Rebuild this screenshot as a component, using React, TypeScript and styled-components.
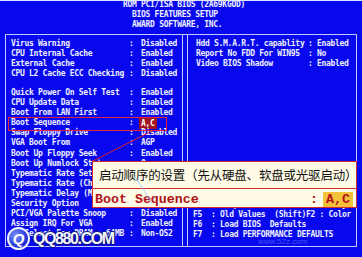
import React from 'react';
import styled, { createGlobalStyle } from 'styled-components';

const GlobalStyle = createGlobalStyle`
  html, body {
    margin: 0;
    padding: 0;
    background: #0808ee;
  }
  body {
    width: 362px;
    height: 257px;
    overflow: hidden;
  }
`;

const Screen = styled.div`
  position: relative;
  width: 362px;
  height: 257px;
  overflow: hidden;
  background: #0808ee;
  box-shadow: inset 0 1px 0 #dfe3ff;
  font-family: "DejaVu Sans Mono", "Liberation Mono", monospace;
  font-weight: bold;
  font-size: 8px;
  letter-spacing: -0.3px;
  color: #eef0ff;
`;

const Header = styled.div`
  padding-left: 123px;
  white-space: pre;
  line-height: 10px;
`;

const Frame = styled.div`
  display: flex;
  gap: 4px;
  margin: 4px 0 0 5px;
  width: 352px;
  height: 213px;
  box-sizing: border-box;
  border: 1px solid #c4c8f8;
`;

const LeftPanel = styled.div`
  width: 177px;
  box-sizing: border-box;
  border-right: 1px solid #c4c8f8;
  padding: 4px 0 0 5px;
`;

const RightPanel = styled.div`
  display: flex;
  flex-direction: column;
  width: 169px;
  box-sizing: border-box;
  border-left: 1px solid #c4c8f8;
  padding: 4px 0 0 8px;
`;

const Row = styled.div<{ $lw: number; $cw: number }>`
  display: grid;
  grid-template-columns: ${p => p.$lw}px ${p => p.$cw}px auto;
  height: 10.1px;
  line-height: 10.1px;
  white-space: pre;
`;

const Gap = styled.div`
  height: 8.6px;
`;

const Picked = styled.span`
  display: inline-block;
  justify-self: start;
  margin-left: -2px;
  padding: 0 2px;
  height: 11px;
  line-height: 11px;
  margin-top: -0.5px;
  background: #a0101e;
  color: #fff;
`;

const HelpBox = styled.div`
  margin: auto 0 0 -8px;
  border-top: 1px solid #c4c8f8;
  padding: 2px 0 6px 5px;
`;

const HelpLine = styled.div`
  height: 10px;
  line-height: 10px;
  white-space: pre;
`;

const Marks = styled.svg`
  position: absolute;
  left: 0;
  top: 0;
  pointer-events: none;
`;

const Callout = styled.div`
  position: absolute;
  left: 92px;
  top: 161px;
  width: 265px;
  height: 47px;
  box-sizing: border-box;
  border: 1.5px solid #d42a2a;
  background: #fffbe6;
  display: flex;
  flex-direction: column;
  letter-spacing: normal;
`;

const CalloutNote = styled.div`
  height: 25.5px;
  display: flex;
  align-items: center;
  padding-left: 6px;
  border-bottom: 1px solid #d42a2a;
  font-family: "Noto Sans CJK SC", "Noto Sans", sans-serif;
  font-weight: normal;
  font-size: 12.5px;
  letter-spacing: -0.2px;
  color: #111;
  white-space: nowrap;
`;

const CalloutValue = styled.div`
  flex: 1;
  display: flex;
  align-items: center;
  padding: 3px 3px 0 2px;
  font-family: "Liberation Mono", "DejaVu Sans Mono", monospace;
  font-weight: bold;
  font-size: 13.3px;
  color: #b3121b;
  white-space: pre;
`;

const Colon = styled.span`
  margin-left: auto;
`;

const BigPicked = styled.span`
  margin-left: 5px;
  padding: 0 3px;
  background: #f3c13a;
  line-height: 15px;
`;

const Logo = styled.div`
  position: absolute;
  left: 7px;
  top: 227px;
  display: flex;
  align-items: center;
  gap: 3px;
  letter-spacing: normal;
`;

const LogoMark = styled.div`
  width: 19px;
  height: 19px;
  border-radius: 50%;
  border: 2px solid #eef2ff;
  background: radial-gradient(circle at 35% 35%, #7d95ff, #1a2ad0 70%);
  display: flex;
  align-items: center;
  justify-content: center;
  font-family: "Liberation Sans", sans-serif;
  font-style: italic;
  font-weight: bold;
  font-size: 15px;
  color: #fff;
`;

const LogoText = styled.span`
  font-family: "Liberation Sans", sans-serif;
  font-weight: bold;
  font-size: 16px;
  letter-spacing: -1.4px;
  color: #f2f4ff;
  text-shadow: 1px 0 0 #0c1470, -1px 0 0 #0c1470, 0 1px 0 #0c1470, 0 -1px 0 #0c1470;
`;

const Watermark = styled.div`
  position: absolute;
  left: 258px;
  top: 237px;
  font-family: "Liberation Sans", sans-serif;
  font-weight: normal;
  font-size: 8px;
  letter-spacing: normal;
  color: #9fb4ff;
  opacity: 0.4;
`;

type Item = [string, string];

const leftTop: Item[] = [
  ['Virus Warning', 'Disabled'],
  ['CPU Internal Cache', 'Enabled'],
  ['External Cache', 'Enabled'],
  ['CPU L2 Cache ECC Checking', 'Disabled'],
];

const leftRest: Item[] = [
  ['Quick Power On Self Test', 'Enabled'],
  ['CPU Update Data', 'Enabled'],
  ['Boot From LAN First', 'Enabled'],
  ['Boot Sequence', 'A,C'],
  ['Swap Floppy Drive', 'Disabled'],
  ['VGA Boot From', 'AGP'],
  ['Boot Up Floppy Seek', 'Enabled'],
  ['Boot Up Numlock Status', 'On'],
  ['Typematic Rate Setting', 'Disabled'],
  ['Typematic Rate (Chars/Sec)', '6'],
  ['Typematic Delay (Msec)', '250'],
  ['Security Option', 'Setup'],
  ['PCI/VGA Palette Snoop', 'Disabled'],
  ['Assign IRQ For VGA', 'Enabled'],
  ['OS Select For DRAM > 64MB', 'Non-OS2'],
];

const rightItems: Item[] = [
  ['Hdd S.M.A.R.T. capablity', 'Enabled'],
  ['Report No FDD For WIN95', 'No'],
  ['Video BIOS Shadow', 'Enabled'],
];

const help = [
  'ESC : Quit      \u2191\u2193\u2192\u2190 : Select Item',
  'F1  : Help      PU/PD/+/- : Modify',
  'F5  : Old Values  (Shift)F2 : Color',
  'F6  : Load BIOS  Defaults',
  'F7  : Load PERFORMANCE DEFAULTS',
];

function SettingRow({ item, lw, cw }: { item: Item; lw: number; cw: number }) {
  const [label, value] = item;
  return (
    <Row $lw={lw} $cw={cw}>
      <span>{label}</span>
      <span>:</span>
      {label === 'Boot Sequence' ? <Picked>{value}</Picked> : <span>{value}</span>}
    </Row>
  );
}

export default function App() {
  return (
    <>
      <GlobalStyle />
      <Screen>
        <Header>
          {'ROM PCI/ISA BIOS (2A69KGOD)'}
          {'\n  BIOS FEATURES SETUP'}
          {'\n  AWARD SOFTWARE, INC.'}
        </Header>
        <Frame>
          <LeftPanel>
            {leftTop.map((it, i) => <SettingRow key={i} item={it} lw={118} cw={12} />)}
            <Gap />
            {leftRest.map((it, i) => <SettingRow key={i} item={it} lw={118} cw={12} />)}
          </LeftPanel>
          <RightPanel>
            {rightItems.map((it, i) => <SettingRow key={i} item={it} lw={112} cw={9} />)}
            <HelpBox>
              {help.map((h, i) => <HelpLine key={i}>{h}</HelpLine>)}
            </HelpBox>
          </RightPanel>
        </Frame>

        <Marks width="362" height="257" viewBox="0 0 362 257">
          <rect x="8.5" y="117.5" width="158" height="13" fill="none" stroke="#e8203c" strokeWidth="1" />
          <line x1="153" y1="130.5" x2="92" y2="161.5" stroke="#e02030" strokeWidth="1" />
        </Marks>

        <Callout>
          <CalloutNote>启动顺序的设置（先从硬盘、软盘或光驱启动）</CalloutNote>
          <CalloutValue>
            <span>Boot Sequence</span>
            <Colon>:</Colon>
            <BigPicked>A,C</BigPicked>
          </CalloutValue>
        </Callout>

        <Marks width="362" height="257" viewBox="0 0 362 257">
          <path d="M134 176 C140 184 146 192 152 204" fill="none" stroke="#8fc8ff" strokeWidth="1.5" opacity="0.45" />
        </Marks>

        <Watermark>www.52z.com</Watermark>

        <Logo>
          <LogoMark>Q</LogoMark>
          <LogoText>QQ880.COM</LogoText>
        </Logo>
      </Screen>
    </>
  );
}
